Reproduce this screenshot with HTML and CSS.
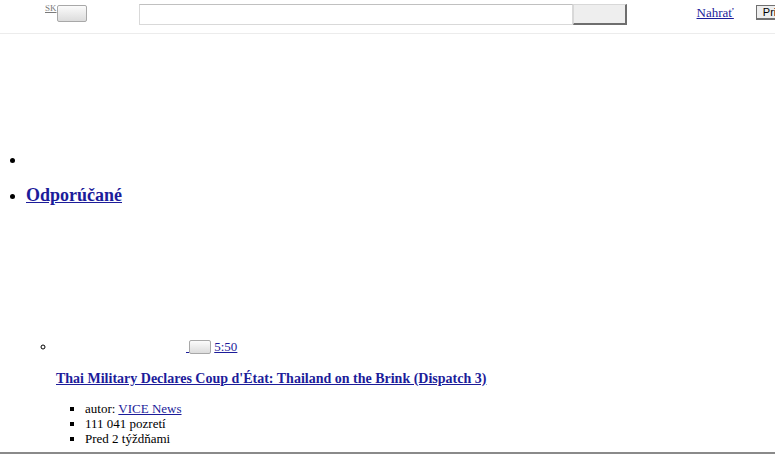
FILE: index.html
```html
<!DOCTYPE html>
<html lang="sk">
<head>
<meta charset="utf-8">
<title>YouTube</title>
<link rel="stylesheet" href="styles.css">
</head>
<body>
<div class="masthead">
  <a class="lang" href="#">SK</a>
  <button class="lang-btn" type="button"></button>
  <input class="search-input" type="text">
  <button class="search-btn" type="button"></button>
  <a class="upload" href="#">Nahrať</a>
  <button class="signin" type="button">Prihlásiť sa</button>
</div>
<ul class="guide">
  <li class="guide-empty"></li>
  <li class="guide-item">
    <a class="guide-title" href="#">Odporúčané</a>
    <ul class="videos">
      <li class="video">
        <div class="thumb-row"><span class="thumb-space"></span><a class="thumb-link" href="#"> <button class="mini-btn" type="button"></button></a><a class="duration" href="#">5:50</a></div>
        <a class="video-title" href="#">Thai Military Declares Coup d'État: Thailand on the Brink (Dispatch 3)</a>
        <ul class="meta">
          <li>autor: <a href="#">VICE News</a></li>
          <li>111 041 pozretí</li>
          <li>Pred 2 týždňami</li>
        </ul>
      </li>
    </ul>
  </li>
</ul>
<div class="next-rule"></div>
</body>
</html>
```
FILE: styles.css
```css
html, body {
  margin: 0;
  padding: 0;
  overflow: hidden;
  background: #ffffff;
  font-family: "Liberation Serif", "Times New Roman", serif;
  color: #000;
}

a {
  color: #1c1c9a;
}

.masthead {
  display: flex;
  align-items: flex-start;
  height: 33px;
  border-bottom: 1px solid #ececec;
  white-space: nowrap;
}

.masthead > * {
  flex-shrink: 0;
}

.lang {
  margin-left: 45px;
  margin-top: 3px;
  font-size: 9px;
  color: #7a7a7a;
}

.lang-btn {
  width: 30px;
  height: 17px;
  margin: 5px 0 0 0;
  padding: 0;
  border: 1px solid #a8a8a8;
  border-radius: 2px;
  background: linear-gradient(#fbfbfb, #dcdcdc);
}

.search-input {
  box-sizing: border-box;
  width: 434px;
  height: 21px;
  margin: 4px 0 0 52px;
  padding: 0;
  border: 1px solid #d9d9d9;
  border-top-color: #c0c0c0;
  background: #fff;
}

.search-btn {
  box-sizing: border-box;
  width: 54px;
  height: 21px;
  margin-top: 4px;
  padding: 0;
  border: 1px solid #d8d8d8;
  border-right: 2px solid #6e6e6e;
  border-bottom: 2px solid #6e6e6e;
  background: #eeeeee;
}

.upload {
  margin: 5px 0 0 70px;
  font-size: 13px;
}

.signin {
  box-sizing: border-box;
  height: 15px;
  margin: 5px 0 0 22px;
  padding: 0 6px;
  border: 1px solid #707070;
  border-right-width: 2px;
  border-bottom-width: 2px;
  background: #eeeeee;
  font-family: "Liberation Sans", Arial, sans-serif;
  font-size: 11px;
  line-height: 11px;
  color: #000;
}

.guide {
  margin: 117px 0 0 0;
  padding-left: 26px;
  list-style: disc;
}

.guide-empty {
  font-size: 16px;
  height: 18px;
}

.guide-item {
  margin-top: 16px;
  font-size: 16px;
}

.guide-title {
  font-size: 18px;
  font-weight: bold;
}

.videos {
  margin: 133px 0 0 0;
  padding-left: 30px;
  list-style: circle;
  font-size: 13px;
}

.video {
  font-size: 13px;
}

.thumb-row {
  line-height: 15px;
}

.thumb-space {
  display: inline-block;
  width: 130px;
}

.mini-btn {
  width: 22px;
  height: 14px;
  padding: 0;
  margin: 0 3px 0 0;
  vertical-align: -2px;
  border: 1px solid #a8a8a8;
  border-radius: 2px;
  background: linear-gradient(#fbfbfb, #dcdcdc);
}

.video-title {
  display: block;
  margin-top: 17px;
  font-size: 14px;
  font-weight: bold;
}

.meta {
  margin: 14px 0 0 0;
  padding-left: 29px;
  list-style: square;
  font-size: 13px;
  line-height: 15px;
}

.next-rule {
  margin-top: 6px;
  border-top: 2px solid #8a8a8a;
}
```
